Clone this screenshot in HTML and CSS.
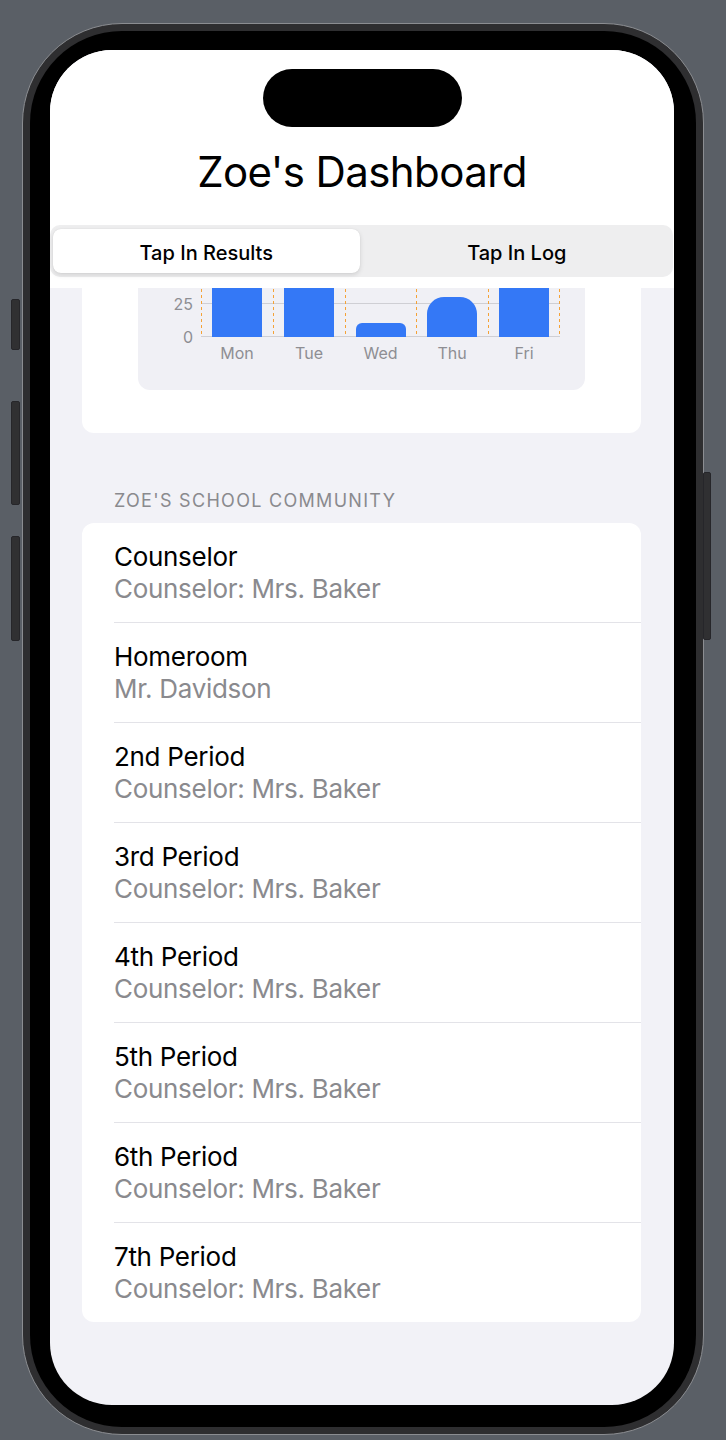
FILE: index.html
```html
<!DOCTYPE html>
<html lang="en">
<head>
<meta charset="utf-8">
<title>Zoe's Dashboard</title>
<link rel="stylesheet" href="styles.css">
</head>
<body>
<div class="device">
  <span class="hw-btn btn-action"></span>
  <span class="hw-btn btn-volup"></span>
  <span class="hw-btn btn-voldown"></span>
  <span class="hw-btn btn-power"></span>
  <div class="phone">
    <div class="bezel">
      <div class="screen">
        <header class="top">
          <div class="island"></div>
          <h1 class="title">Zoe's Dashboard</h1>
          <div class="segmented">
            <div class="seg seg-active">Tap In Results</div>
            <div class="seg">Tap In Log</div>
          </div>
        </header>
        <main class="scroll">
          <section class="card chart-card">
            <div class="chart-box">
              <div class="chart-grid">
                <div class="yaxis">
                  <span class="ytick">0</span>
                  <span class="ytick">25</span>
                </div>
                <div class="plot">
                  <div class="slot"><div class="bar" style="height:96px"></div></div>
                  <div class="slot"><div class="bar" style="height:104px"></div></div>
                  <div class="slot"><div class="bar" style="height:14px"></div></div>
                  <div class="slot"><div class="bar bar-round" style="height:40px"></div></div>
                  <div class="slot"><div class="bar" style="height:92px"></div></div>
                </div>
                <div class="xaxis">
                  <span>Mon</span><span>Tue</span><span>Wed</span><span>Thu</span><span>Fri</span>
                </div>
              </div>
            </div>
          </section>

          <h2 class="section-header">Zoe's School Community</h2>
          <ul class="list">
            <li class="row"><span class="row-title">Counselor</span><span class="row-sub">Counselor: Mrs. Baker</span></li>
            <li class="row"><span class="row-title">Homeroom</span><span class="row-sub">Mr. Davidson</span></li>
            <li class="row"><span class="row-title">2nd Period</span><span class="row-sub">Counselor: Mrs. Baker</span></li>
            <li class="row"><span class="row-title">3rd Period</span><span class="row-sub">Counselor: Mrs. Baker</span></li>
            <li class="row"><span class="row-title">4th Period</span><span class="row-sub">Counselor: Mrs. Baker</span></li>
            <li class="row"><span class="row-title">5th Period</span><span class="row-sub">Counselor: Mrs. Baker</span></li>
            <li class="row"><span class="row-title">6th Period</span><span class="row-sub">Counselor: Mrs. Baker</span></li>
            <li class="row"><span class="row-title">7th Period</span><span class="row-sub">Counselor: Mrs. Baker</span></li>
          </ul>
        </main>
      </div>
    </div>
  </div>
</div>
</body>
</html>
```

FILE: styles.css
```css
* { box-sizing: border-box; }

html, body {
  margin: 0;
  padding: 0;
}

body {
  background: #5a5f66;
  font-family: Inter, "Noto Sans", "Liberation Sans", sans-serif;
  overflow: hidden;
}

.device {
  position: relative;
  width: 726px;
  height: 1440px;
  padding: 23px 0 0 22px;
}

/* hardware side buttons (decorative, outside the frame) */
.hw-btn {
  position: absolute;
  background: #303032;
  border: 1px solid #26262a;
  border-radius: 2px;
}
.btn-action  { left: 11px; top: 299px; width: 9px; height: 51px; }
.btn-volup   { left: 11px; top: 401px; width: 9px; height: 104px; }
.btn-voldown { left: 11px; top: 536px; width: 9px; height: 105px; }
.btn-power   { left: 703px; top: 472px; width: 8px; height: 168px; }

.phone {
  width: 682px;
  height: 1412px;
  border: 1px solid #8b8d91;
  border-radius: 100px;
  background: #2e2e30;
  padding: 7px;
}

.bezel {
  height: 100%;
  background: #000;
  border-radius: 92px;
  padding: 19px 22px 22px 20px;
}

.screen {
  height: 100%;
  border-radius: 62px;
  overflow: hidden;
  background: #f2f2f7;
  display: flex;
  flex-direction: column;
}

/* ---------- top (white) ---------- */
.top {
  background: #fff;
  display: flex;
  flex-direction: column;
  align-items: center;
  flex: none;
}

.island {
  margin-top: 19px;
  width: 199px;
  height: 58px;
  border-radius: 29px;
  background: #000;
}

.title {
  margin: 20px 0 0;
  height: 48px;
  font-size: 42px;
  line-height: 50px;
  font-weight: 400;
  color: #000;
  letter-spacing: -0.6px;
}

.segmented {
  margin: 30px 1px 11px 0;
  align-self: stretch;
  height: 52px;
  background: #eeeeef;
  border-radius: 10px;
  padding: 4px 3px;
  display: grid;
  grid-template-columns: 1fr 1fr;
  column-gap: 4px;
}

.seg {
  height: 44px;
  display: flex;
  align-items: center;
  justify-content: center;
  padding-top: 3px;
  font-size: 20px;
  line-height: 24px;
  font-weight: 500;
  color: #000;
  border-radius: 8px;
}

.seg-active {
  background: #fff;
  box-shadow: 0 2px 5px rgba(0, 0, 0, 0.12), 0 0 1px rgba(0, 0, 0, 0.12);
}

/* ---------- scroll area ---------- */
.scroll {
  flex: 1;
  overflow: hidden;
  display: flex;
  flex-direction: column;
}

.card {
  background: #fff;
  border-radius: 12px;
  margin: 0 33px 0 32px;
}

.chart-card {
  margin-top: -133px;
  padding: 16px 56px 43px;
}

.chart-box {
  background: #f0f0f5;
  border-radius: 12px;
  padding: 16px 25px 27px 20px;
}

.chart-grid {
  display: grid;
  grid-template-columns: 35px 359px;
  grid-template-rows: 150px auto;
  column-gap: 8px;
}

.yaxis {
  grid-column: 1;
  grid-row: 1;
  align-self: end;
  margin-bottom: -10px;
  display: flex;
  flex-direction: column-reverse;
}

.ytick {
  height: 33px;
  display: flex;
  align-items: flex-end;
  justify-content: flex-end;
  font-size: 16px;
  line-height: 20px;
  color: #8e8e93;
}

.plot {
  grid-column: 2;
  grid-row: 1;
  display: grid;
  grid-template-columns: 72px 72px 71px 72px 72px;
  align-items: end;
  background: repeating-linear-gradient(to top, #cfcfd4 0 1px, transparent 1px 33px);
}

.slot {
  height: 100%;
  display: flex;
  align-items: flex-end;
  justify-content: center;
  background: repeating-linear-gradient(to bottom, #f5a236 0 3px, transparent 3px 6px) left top / 1px 100% no-repeat;
}

.slot:last-child {
  background:
    repeating-linear-gradient(to bottom, #f5a236 0 3px, transparent 3px 6px) left top / 1px 100% no-repeat,
    repeating-linear-gradient(to bottom, #f5a236 0 3px, transparent 3px 6px) right top / 1px 100% no-repeat;
}

.bar {
  width: 50px;
  background: #3478f6;
  border-radius: 6px 6px 0 0;
}

.bar-round {
  border-radius: 17px 17px 0 0;
}

.xaxis {
  grid-column: 2;
  grid-row: 2;
  display: grid;
  grid-template-columns: 72px 72px 71px 72px 72px;
  margin-top: 6px;
}

.xaxis span {
  text-align: center;
  font-size: 16px;
  line-height: 20px;
  color: #8e8e93;
}

/* ---------- list ---------- */
.section-header {
  margin: 57px 0 11px 64px;
  font-size: 18px;
  line-height: 22px;
  font-weight: 400;
  color: #8a8a8e;
  text-transform: uppercase;
  letter-spacing: 1.3px;
}

.list {
  list-style: none;
  margin: 0 33px 0 32px;
  padding: 0;
  background: #fff;
  border-radius: 12px;
}

.row {
  margin-left: 32px;
  padding: 18px 0 17px;
  border-bottom: 1px solid #e3e3e8;
  display: flex;
  flex-direction: column;
}

.row:last-child {
  border-bottom: none;
}

.row-title,
.row-sub {
  font-size: 26px;
  line-height: 32px;
  letter-spacing: -0.3px;
}

.row-title { color: #000; }
.row-sub { color: #8a8a8e; }
```
